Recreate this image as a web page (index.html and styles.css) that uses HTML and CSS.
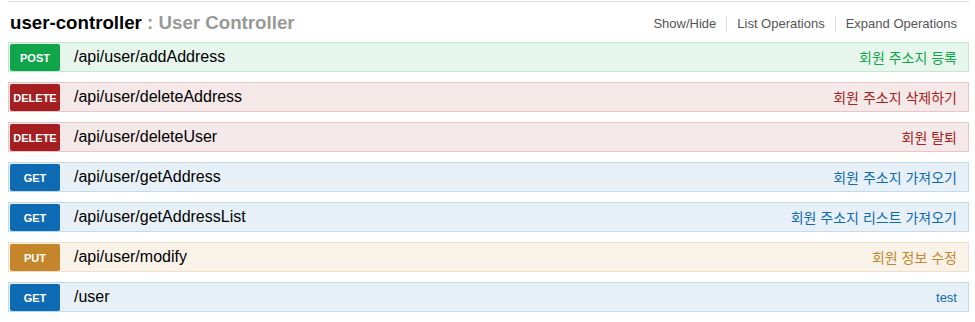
FILE: index.html
```html
<!DOCTYPE html>
<html lang="ko">
<head>
  <meta charset="UTF-8" />
  <title>user-controller</title>
  <link rel="stylesheet" href="styles.css">
</head>
<body>
  <div class="resource">
    <div class="heading">
      <h2><span class="name">user-controller</span> <span class="desc">: User Controller</span></h2>
      <ul class="options">
        <li>Show/Hide</li>
        <li>List Operations</li>
        <li>Expand Operations</li>
      </ul>
    </div>

    <ul class="endpoints">
      <li class="op post">
        <span class="method">POST</span>
        <span class="path">/api/user/addAddress</span>
        <span class="summary">회원 주소지 등록</span>
      </li>
      <li class="op delete">
        <span class="method">DELETE</span>
        <span class="path">/api/user/deleteAddress</span>
        <span class="summary">회원 주소지 삭제하기</span>
      </li>
      <li class="op delete">
        <span class="method">DELETE</span>
        <span class="path">/api/user/deleteUser</span>
        <span class="summary">회원 탈퇴</span>
      </li>
      <li class="op get">
        <span class="method">GET</span>
        <span class="path">/api/user/getAddress</span>
        <span class="summary">회원 주소지 가져오기</span>
      </li>
      <li class="op get">
        <span class="method">GET</span>
        <span class="path">/api/user/getAddressList</span>
        <span class="summary">회원 주소지 리스트 가져오기</span>
      </li>
      <li class="op put">
        <span class="method">PUT</span>
        <span class="path">/api/user/modify</span>
        <span class="summary">회원 정보 수정</span>
      </li>
      <li class="op get">
        <span class="method">GET</span>
        <span class="path">/user</span>
        <span class="summary latin">test</span>
      </li>
    </ul>
  </div>
</body>
</html>
```

FILE: styles.css
```css
body {
  margin: 0;
  background: #fff;
  font-family: "Liberation Sans", Arial, "Noto Sans CJK KR", sans-serif;
  color: #000;
}
.resource {
  margin: 1px 6px 0 8px;
  border-top: 1px solid #ddd;
}
.heading {
  display: flex;
  align-items: center;
  justify-content: space-between;
  height: 40px;
}
.heading h2 {
  margin: 1px 0 0 2px;
  font-size: 18.7px;
  font-weight: bold;
}
.heading h2 .desc {
  color: #999;
}
ul.options {
  display: flex;
  list-style: none;
  margin: 4px 0 0 0;
  padding: 0;
  font-size: 13px;
  color: #555;
}
ul.options li {
  padding: 0 10px;
  border-right: 1px solid #ddd;
  line-height: 16px;
}
ul.options li:last-child {
  border-right: none;
  padding-right: 12px;
}
ul.endpoints {
  list-style: none;
  margin: 0;
  padding: 0;
}
.op {
  display: flex;
  align-items: center;
  height: 28px;
  margin-bottom: 10px;
  border: 1px solid;
}
.op .method {
  width: 50px;
  height: 27px;
  margin: 0 0 0 1px;
  border-radius: 2px;
  color: #fff;
  font-size: 11px;
  font-weight: bold;
  text-align: center;
  line-height: 28px;
}
.op .path {
  flex: 1;
  padding-left: 14px;
  font-size: 16px;
}
.op .summary {
  padding-right: 11px;
  font-size: 14px;
  font-family: "Noto Sans CJK KR", "Liberation Sans", sans-serif;
}
.op .summary.latin {
  font-size: 13px;
  font-family: "Liberation Sans", Arial, sans-serif;
}
.post { background: #e7f6ec; border-color: #c3e8d1; }
.post .method { background: #10a54a; }
.post .summary { color: #10a54a; }
.delete { background: #f5e8e8; border-color: #e8c6c7; }
.delete .method { background: #a41e22; }
.delete .summary { color: #a41e22; }
.get { background: #e7f0f7; border-color: #c3d9ec; }
.get .method { background: #0f6ab4; }
.get .summary { color: #0f6ab4; }
.put { background: #f9f2e9; border-color: #f0e0ca; }
.put .method { background: #c5862b; }
.put .summary { color: #c5862b; }
```
